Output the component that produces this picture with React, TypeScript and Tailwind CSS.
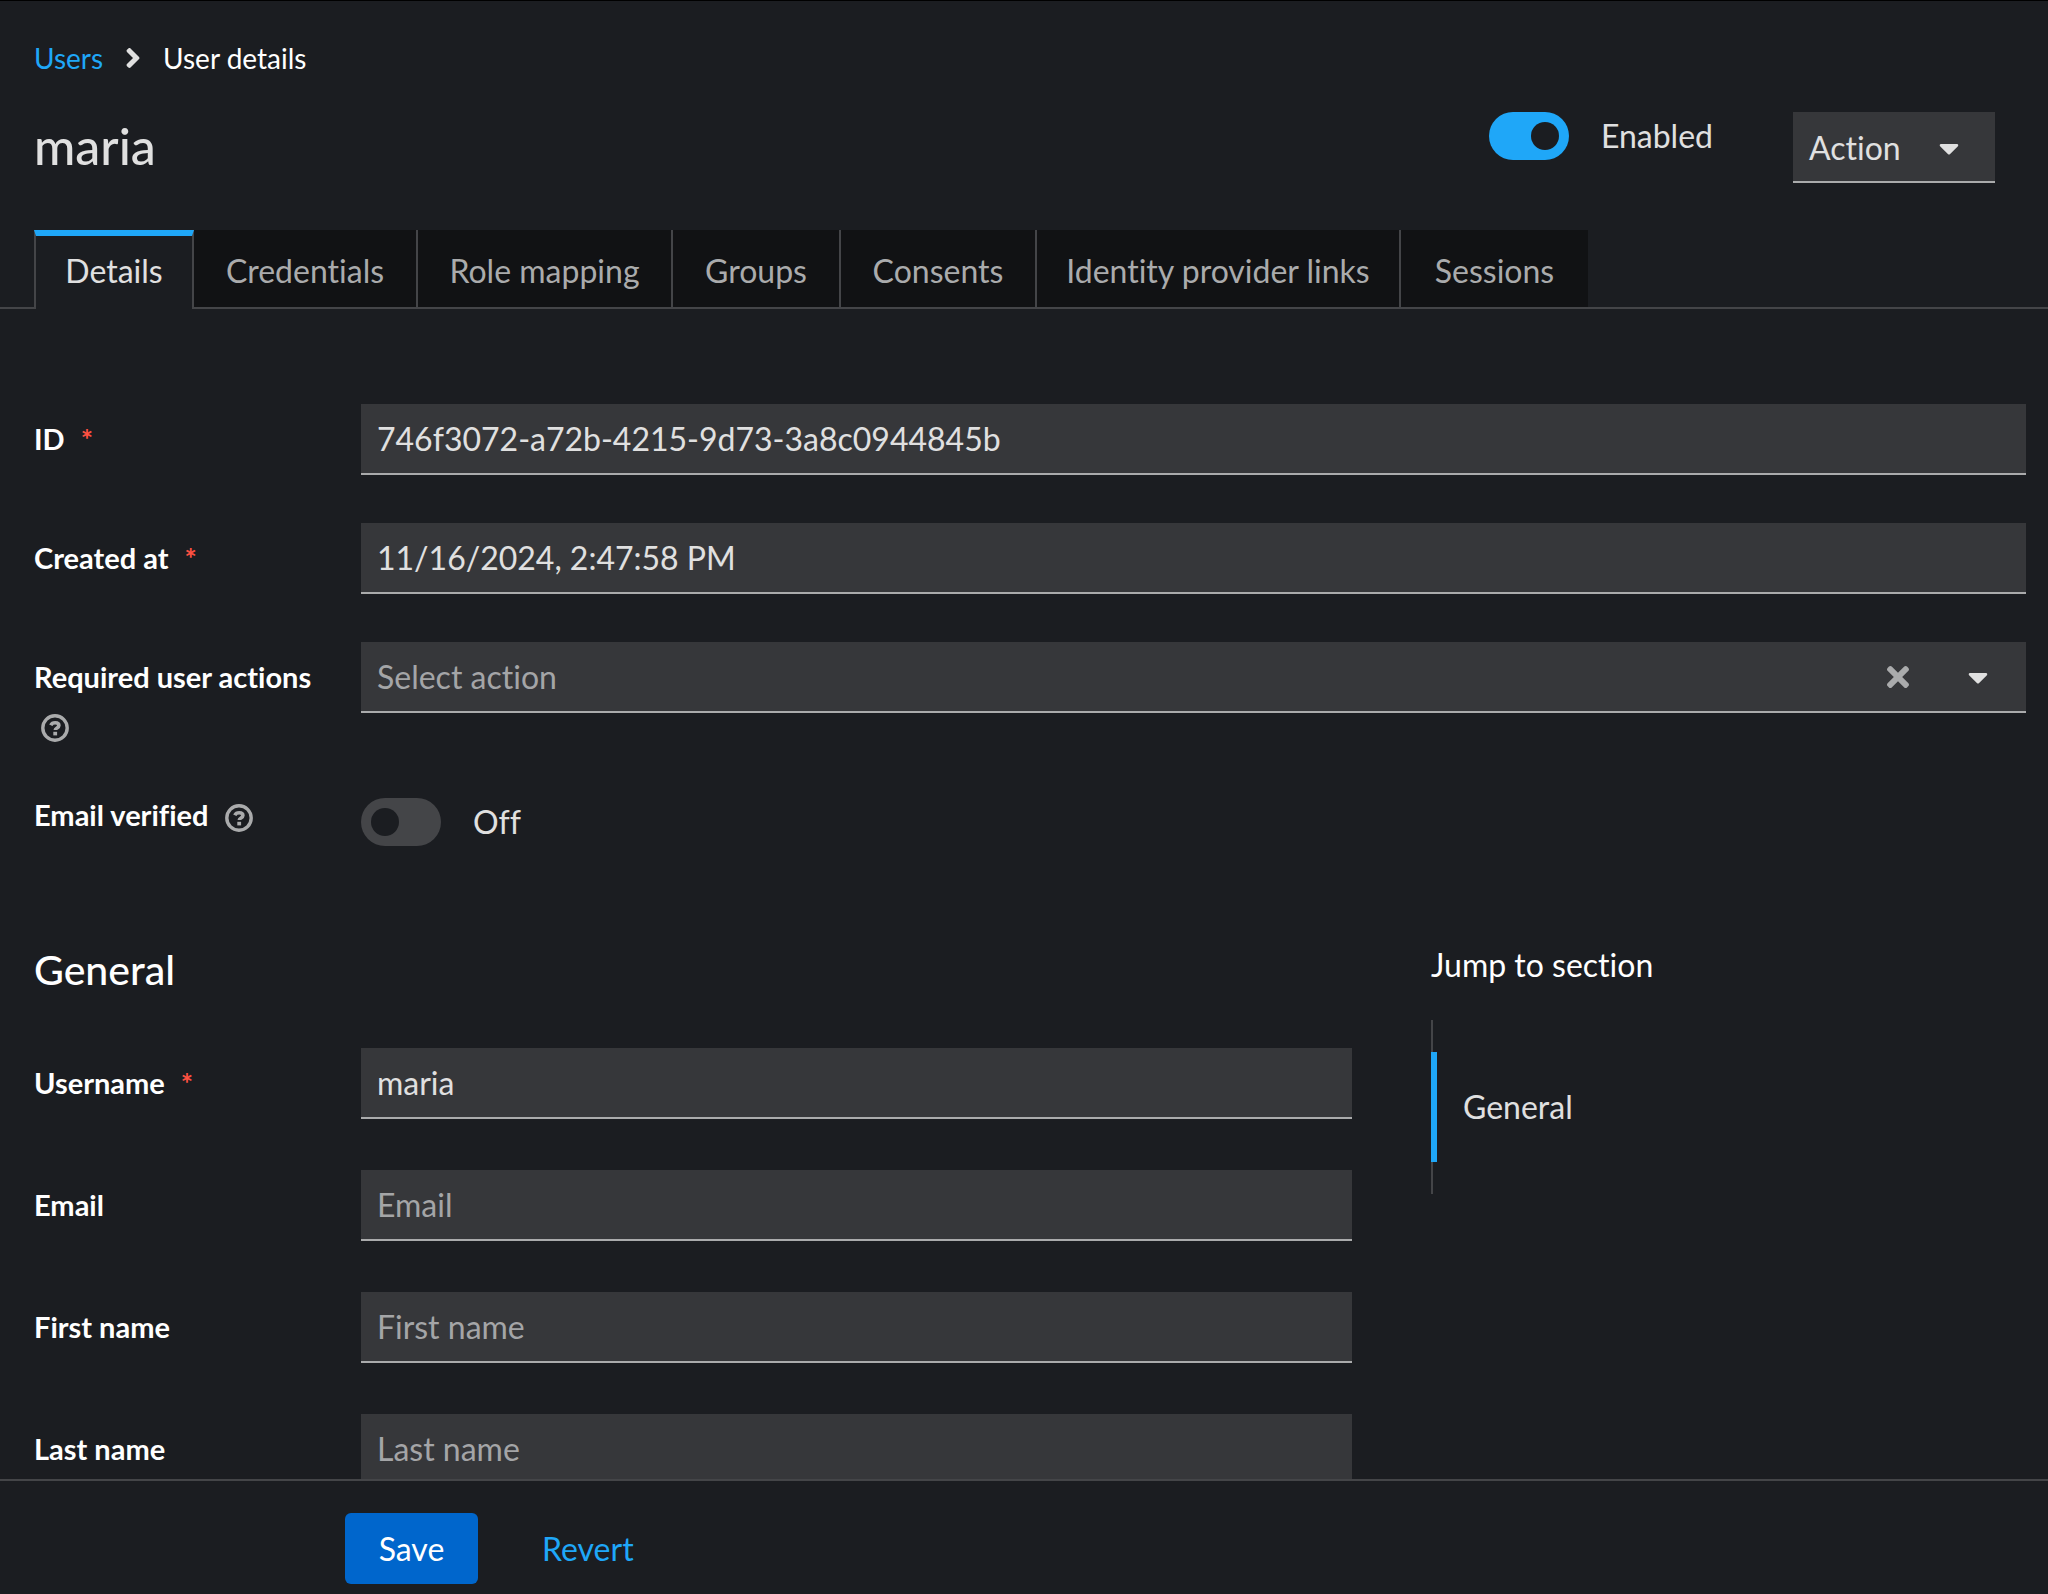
import { useState } from "react";
import { FaAngleRight, FaCaretDown, FaTimes } from "react-icons/fa";

const tabs = [
  { name: "Credentials", width: "w-[224px]" },
  { name: "Role mapping", width: "w-[255px]" },
  { name: "Groups", width: "w-[168px]" },
  { name: "Consents", width: "w-[196px]" },
  { name: "Identity provider links", width: "w-[364px]" },
  { name: "Sessions", width: "w-[187px]" },
];

const inputClass =
  "h-[71px] w-full border-b-2 border-[#aaabac] bg-[#36373a] px-4 text-[32px] text-[#e0e0e0] placeholder:text-[#a4a5a7] outline-none";

const HelpIcon = () => (
  <svg viewBox="0 0 28 28" className="size-7" fill="none" stroke="#aaabac">
    <circle cx="14" cy="14" r="12.2" strokeWidth="3.4" />
    <path d="M9.800 11.200C10.800 9.200 12.200 8.800 14.200 8.800c2.300 0 3.700 1.100 3.700 2.800 0 2.400-3.600 2.300-3.600 4.400" strokeWidth="3.600" />
    <path d="M14.200 17.800v3.600" strokeWidth="3.800" />
  </svg>
);

type LabelProps = {
  id: string;
  text: string;
  required?: boolean;
};

const Label = ({ id, text, required }: LabelProps) => (
  <label htmlFor={id} className="text-[29px] leading-[42px] font-bold text-white">
    {text}
    {required && <span className="ml-4 text-[#fe5142]">*</span>}
  </label>
);

type SwitchProps = {
  id: string;
  label: string;
  checked: boolean;
  onChange: (value: boolean) => void;
};

const Switch = ({ id, label, checked, onChange }: SwitchProps) => (
  <div className="flex h-12 items-center gap-8">
    <input
      id={id}
      type="checkbox"
      role="switch"
      checked={checked}
      onChange={(e) => onChange(e.target.checked)}
      className="flex h-12 w-20 appearance-none items-center rounded-full bg-[#444548] px-[10px] before:size-7 before:rounded-full before:bg-[#1b1d21] checked:justify-end checked:bg-[#1fa7f8]"
    />
    <label htmlFor={id} className="text-[32px] text-[#e0e0e0]">
      {label}
    </label>
  </div>
);

type FieldProps = LabelProps & {
  value?: string;
  placeholder?: string;
};

const Field = ({ id, text, required, value, placeholder }: FieldProps) => (
  <div className="flex">
    <div className="w-[327px] shrink-0 pt-[14px]">
      <Label id={id} text={text} required={required} />
    </div>
    <input id={id} type="text" defaultValue={value} placeholder={placeholder} className={inputClass} />
  </div>
);

const App = () => {
  const [enabled, setEnabled] = useState(true);
  const [verified, setVerified] = useState(false);
  const [action, setAction] = useState("");

  return (
    <div className="flex h-screen flex-col border-t border-black bg-[#1b1d21] font-[Lato,sans-serif] text-[#e0e0e0] [font-variant-ligatures:none]">
      <main className="min-h-0 flex-1 overflow-y-auto [scrollbar-width:none]">
        <nav aria-label="Breadcrumb" className="flex items-center gap-[22px] px-[34px] pt-9 text-[28px] leading-[42px]">
          <a href="#users" className="text-[#1fa7f8]">
            Users
          </a>
          <FaAngleRight className="h-8 w-4" />
          <span className="text-white">User details</span>
        </nav>

        <header className="flex items-start justify-between pt-[33px] pr-[53px] pl-[34px]">
          <h1 className="pt-1 text-[50px] leading-[60px] font-medium">maria</h1>
          <div className="flex gap-20">
            <Switch id="enabled" label="Enabled" checked={enabled} onChange={setEnabled} />
            <button className="flex h-[71px] w-[202px] items-center gap-8 border-b-2 border-[#aaabac] bg-[#36373a] px-4 pt-[2px] text-[32px]">
              Action
              <FaCaretDown className="size-8" />
            </button>
          </div>
        </header>

        <div role="tablist" className="mt-[47px] flex h-[79px] text-[32px]">
          <div className="w-[34px] border-b-2 border-[#444548]" />
          <button
            role="tab"
            aria-selected="true"
            className="w-[160px] border-x-2 border-t-[6px] border-x-[#444548] border-t-[#1fa7f8] pb-1"
          >
            Details
          </button>
          {tabs.map((tab) => (
            <button
              key={tab.name}
              role="tab"
              aria-selected="false"
              className={`${tab.width} border-r-2 border-b-2 border-[#444548] bg-[#111214] pt-1 text-[#aaabac] last-of-type:border-r-0`}
            >
              {tab.name}
            </button>
          ))}
          <div className="flex-1 border-b-2 border-[#444548]" />
        </div>

        <form id="user-form" className="pt-[95px] pr-[37px] pl-[34px]">
          <div className="-mr-[15px] flex flex-col gap-12">
            <Field id="id" text="ID" required value="746f3072-a72b-4215-9d73-3a8c0944845b" />
            <Field id="created" text="Created at" required value="11/16/2024, 2:47:58 PM" />
            <div className="flex pb-1">
              <div className="w-[327px] shrink-0 pt-[14px]">
                <Label id="actions" text="Required user actions" />
                <button type="button" aria-label="Help for required user actions" className="mt-4 ml-[7px] block">
                  <HelpIcon />
                </button>
              </div>
              <div className="flex h-[71px] flex-1 items-center border-b-2 border-[#aaabac] bg-[#36373a] pr-8">
                <input
                  id="actions"
                  type="text"
                  value={action}
                  onChange={(e) => setAction(e.target.value)}
                  placeholder="Select action"
                  className="min-w-0 flex-1 px-4 text-[32px] outline-none placeholder:text-[#a4a5a7]"
                />
                <button type="button" aria-label="Clear" onClick={() => setAction("")} className="text-[#aaabac]">
                  <FaTimes className="size-8" />
                </button>
                <button type="button" aria-label="Open menu" className="ml-12">
                  <FaCaretDown className="size-8" />
                </button>
              </div>
            </div>
            <div className="flex">
              <div className="flex w-[327px] shrink-0 items-start gap-4">
                <Label id="verified" text="Email verified" />
                <button type="button" aria-label="Help for email verified" className="pt-[10px]">
                  <HelpIcon />
                </button>
              </div>
              <div className="pt-1">
                <Switch id="verified" label={verified ? "On" : "Off"} checked={verified} onChange={setVerified} />
              </div>
            </div>
          </div>

          <div className="flex gap-[79px] pt-[98px]">
            <section className="w-2/3 shrink-0">
              <h2 className="text-[41px] leading-[52px] font-medium text-white">General</h2>
              <div className="flex flex-col gap-[51px] pt-[52px]">
                <Field id="username" text="Username" required value="maria" />
                <Field id="email" text="Email" placeholder="Email" />
                <Field id="first-name" text="First name" placeholder="First name" />
                <Field id="last-name" text="Last name" placeholder="Last name" />
              </div>
            </section>
            <nav aria-label="Jump to section" className="flex-1">
              <p className="text-[32px] leading-[42px] text-white">Jump to section</p>
              <ul className="mt-[34px] w-full border-l-2 border-[#444548] py-8">
                <li className="-ml-[2px] border-l-[6px] border-[#1fa7f8]">
                  <a href="#general" className="block px-[26px] py-8 text-[32px] leading-[46px]">
                    General
                  </a>
                </li>
              </ul>
            </nav>
          </div>
        </form>
      </main>

      <footer className="flex gap-8 border-t-2 border-[#444548] pt-8 pb-[10px] pl-[345px] text-[32px]">
        <button type="submit" form="user-form" className="h-[71px] min-w-[133px] rounded-md bg-[#0066cc] px-8 text-white">
          Save
        </button>
        <button type="reset" form="user-form" className="h-[71px] px-8 text-[#1fa7f8]">
          Revert
        </button>
      </footer>
    </div>
  );
};

export default App;
